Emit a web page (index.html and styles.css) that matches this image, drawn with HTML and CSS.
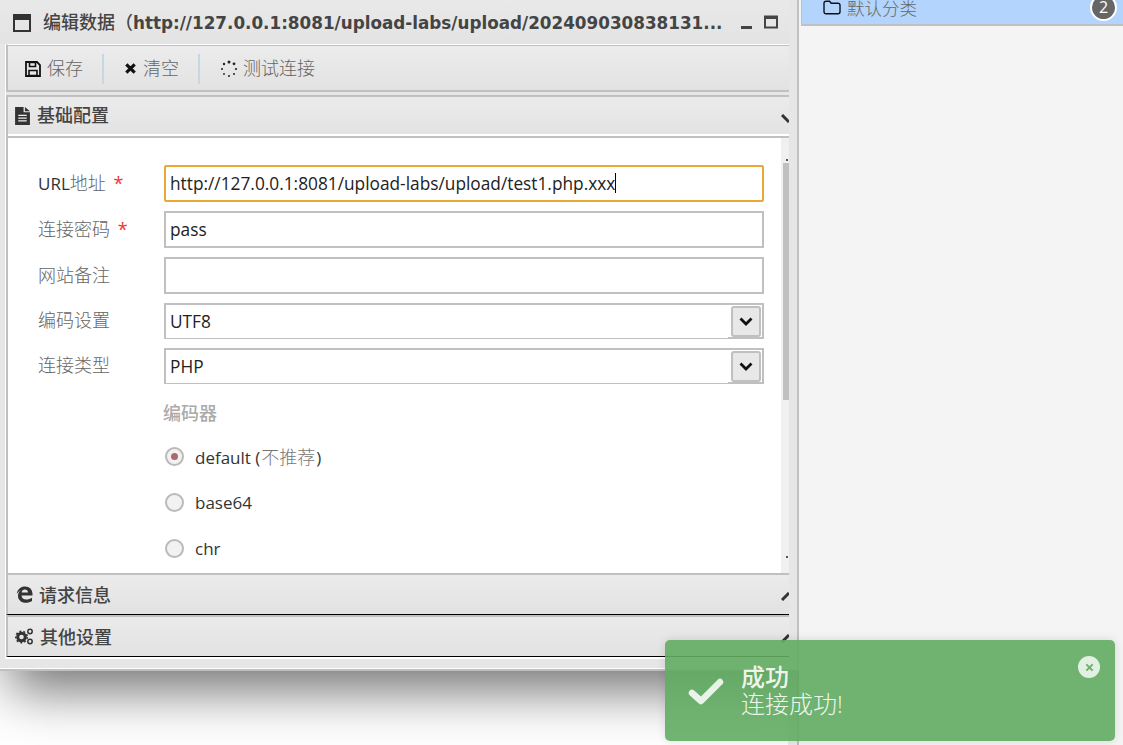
FILE: index.html
```html
<!DOCTYPE html>
<html lang="zh">
<head>
<meta charset="utf-8">
<title>编辑数据</title>
<link rel="stylesheet" href="styles.css">
</head>
<body>
<div class="page">
  <div class="left-pane"></div>
  <div class="splitter"></div>
  <aside class="sidebar">
    <div class="cat-row">
      <svg class="folder" viewBox="0 0 18 15" width="18" height="15"><path d="M3 1.200h3.600l1.600 2h6.800a2 2 0 0 1 2 2v6.600a2 2 0 0 1-2 2H3a2 2 0 0 1-2-2V3.200a2 2 0 0 1 2-2z" fill="none" stroke="#111" stroke-width="1.400"/></svg>
      <span class="cat-name">默认分类</span>
      <span class="badge">2</span>
    </div>
  </aside>
</div>

<section class="window">
  <header class="titlebar">
    <svg class="win-icon" viewBox="0 0 18 18" width="18" height="18"><path d="M0 0h18v18H0z" fill="#333"/><path d="M2 6h14v10H2z" fill="#e6e6e6"/></svg>
    <h1 class="win-title"><span class="cjk-title">编辑数据（</span>http://127.0.0.1:8081/upload-labs/upload/202409030838131...</h1>
    <div class="win-controls">
      <svg viewBox="0 0 11 18" width="11" height="18"><path d="M0 13h11v3H0z" fill="#444"/></svg>
      <svg viewBox="0 0 14 18" width="14" height="18"><path d="M1 3.500h12v11H1z" fill="none" stroke="#444" stroke-width="2"/><path d="M1 4h12v2H1z" fill="#444"/></svg>
      <svg viewBox="0 0 3 18" width="3" height="18"><path d="M0 5l3 3M0 14l3-3" stroke="#444" stroke-width="1.600"/></svg>
    </div>
  </header>

  <div class="win-body">
    <div class="toolbar">
      <button class="tool">
        <svg viewBox="0 0 16 16" width="16" height="16"><path d="M1 1h11l3 3v11H1z" fill="none" stroke="#111" stroke-width="1.800"/><path d="M4.500 1.500h6v4h-6zM4 9.500h8v5H4z" fill="none" stroke="#111" stroke-width="1.600"/></svg>
        <span class="tool-text">保存</span>
      </button>
      <i class="tool-sep"></i>
      <button class="tool tool-clear">
        <svg viewBox="0 0 14 14" width="13" height="13"><path d="M2.500 2.500l9 9M11.500 2.500l-9 9" stroke="#111" stroke-width="3.400"/></svg>
        <span class="tool-text">清空</span>
      </button>
      <i class="tool-sep"></i>
      <button class="tool tool-test">
        <svg viewBox="0 0 18 18" width="18" height="18" fill="#222"><circle cx="9" cy="2" r="1.500"/><circle cx="14" cy="3.800" r="1.400"/><circle cx="16" cy="9" r="1.100"/><circle cx="14" cy="14" r="1"/><circle cx="9" cy="16" r="1"/><circle cx="4" cy="14" r=".9"/><circle cx="2" cy="9" r="1"/><circle cx="4" cy="4" r="1.200"/></svg>
        <span class="tool-text">测试连接</span>
      </button>
    </div>

    <div class="acc-head acc-first">
      <svg viewBox="0 0 14 17" width="15" height="18"><path d="M0 0h8v5h6v12H0z" fill="#333"/><path d="M9.300 0L14 3.900H9.300z" fill="#333"/><path d="M3 8h8M3 10.500h8M3 13h8" stroke="#eee" stroke-width="1.200"/></svg>
      <span class="acc-name">基础配置</span>
      <svg class="chev" viewBox="0 0 8 9" width="8" height="9"><path d="M1 1l7 7" stroke="#333" stroke-width="3"/></svg>
    </div>

    <div class="acc-content">
      <form class="form">
        <div class="row">
          <label class="lbl"><span class="latin-dark">URL</span>地址 <b class="req">*</b></label>
          <div class="field field-focus">http://127.0.0.1:8081/upload-labs/upload/test1.php.xxx<i class="caret"></i></div>
        </div>
        <div class="row">
          <label class="lbl">连接密码 <b class="req">*</b></label>
          <div class="field">pass</div>
        </div>
        <div class="row">
          <label class="lbl">网站备注</label>
          <div class="field"></div>
        </div>
        <div class="row">
          <label class="lbl">编码设置</label>
          <div class="field field-select">UTF8
            <span class="sel-btn"><svg viewBox="0 0 14 9" width="14" height="9"><path d="M1.500 1.500L7 7l5.500-5.500" fill="none" stroke="#111" stroke-width="2.800"/></svg></span>
          </div>
        </div>
        <div class="row">
          <label class="lbl">连接类型</label>
          <div class="field field-select">PHP
            <span class="sel-btn"><svg viewBox="0 0 14 9" width="14" height="9"><path d="M1.500 1.500L7 7l5.500-5.500" fill="none" stroke="#111" stroke-width="2.800"/></svg></span>
          </div>
        </div>
        <div class="encoders">
          <div class="legend">编码器</div>
          <div class="radio-row"><i class="radio radio-on"></i><span>default (<em class="muted">不推荐</em>)</span></div>
          <div class="radio-row"><i class="radio"></i><span>base64</span></div>
          <div class="radio-row"><i class="radio"></i><span>chr</span></div>
        </div>
      </form>
      <div class="scroll">
        <i class="scroll-dot"></i>
        <i class="scroll-thumb"></i>
        <i class="scroll-dot scroll-dot-end"></i>
      </div>
    </div>

    <div class="acc-head acc-closed">
      <svg class="edge-icon" viewBox="0 0 17 17" width="17" height="17"><path fill-rule="evenodd" d="M.8 8C1.300 3 5 .5 9 .5c4.500 0 7.500 3 7.500 7.500v1.500H5.500c.2 2.500 2 4 4.800 4 2 0 4-.6 5.700-1.800v3.200c-1.700 1.200-4 1.800-6.300 1.800-4.500 0-7.700-2.700-7.700-7 0-3 1.500-5 3.500-6C3.700 4.700 1.800 6 .8 8zM5.600 6.500H12c0-2-1.300-3-3.200-3-1.600 0-2.900 1-3.200 3z" fill="#333"/></svg>
      <span class="acc-name">请求信息</span>
      <svg class="chev" viewBox="0 0 8 9" width="8" height="9"><path d="M1 8l7-7" stroke="#333" stroke-width="3"/></svg>
    </div>
    <div class="acc-head acc-closed">
      <svg viewBox="0 0 19 17" width="19" height="17">
        <circle cx="6.500" cy="9" r="3.800" fill="none" stroke="#333" stroke-width="3"/>
        <circle cx="6.500" cy="9" r="5.700" fill="none" stroke="#333" stroke-width="1.600" stroke-dasharray="2 2"/>
        <circle cx="15" cy="3.500" r="2.200" fill="none" stroke="#333" stroke-width="1.500"/>
        <circle cx="15" cy="13.500" r="2.200" fill="none" stroke="#333" stroke-width="1.500"/>
      </svg>
      <span class="acc-name">其他设置</span>
      <svg class="chev" viewBox="0 0 8 9" width="8" height="9"><path d="M1 8l7-7" stroke="#333" stroke-width="3"/></svg>
    </div>
  </div>
</section>

<div class="toast">
  <svg class="toast-check" viewBox="0 0 36 28" width="36" height="28"><path d="M4 16l9 8L32 5" fill="none" stroke="#fff" stroke-opacity=".85" stroke-width="6.500" stroke-linecap="round" stroke-linejoin="round"/></svg>
  <div class="toast-text">
    <div class="toast-title">成功</div>
    <div class="toast-msg">连接成功!</div>
  </div>
  <span class="toast-close"><svg viewBox="0 0 10 10" width="9" height="9"><path d="M1.500 1.500l7 7M8.500 1.500l-7 7" stroke="#6fb070" stroke-width="2.200"/></svg></span>
</div>
</body>
</html>
```

FILE: styles.css
```css
* { box-sizing: border-box; }
html, body { margin: 0; height: 100%; overflow: hidden; }
body {
  font-family: "Open Sans", "Noto Sans CJK SC", sans-serif;
  font-size: 17px;
  color: #333;
  background: #f4f4f4;
}
.page { display: flex; height: 100vh; }
.left-pane { width: 788px; background: #fff; }
.splitter { width: 11px; background: #ececec; border-right: 2px solid #c0c0c0; }
.sidebar { flex: 1; background: #f4f4f4; padding-left: 2px; position: relative; z-index: 1; }
.cat-row {
  display: flex; align-items: center;
  height: 36px; margin-top: -10px; padding-left: 21px;
  background: #b3d4fc;
  border-left: 1px solid #c0c0c0;
  border-bottom: 2px solid #c0c0c0;
}
.folder { margin-right: 6px; }
.cat-name { font-size: 17.500px; color: #666; font-weight: 300; }
.badge {
  margin-left: auto; margin-right: 6px;
  width: 27px; height: 27px; border-radius: 50%;
  background: #666; border: 2px solid #fff; color: #fff;
  display: flex; align-items: center; justify-content: center;
  font-size: 16px;
}

.window {
  position: absolute; left: 0; top: 0;
  width: 799px; height: 671px;
  display: flex; flex-direction: column;
  background: #e6e6e6;
  border-right: 2px solid #c0c0c0;
  border-bottom: 2px solid #c0c0c0;
  box-shadow: 10px 19px 50px rgba(0, 0, 0, .56);
}
.window::after {
  content: ""; height: 1px; background: #fff; margin-top: 9px;
}
.titlebar {
  height: 44px; flex: none; width: 789px;
  display: flex; align-items: center;
  padding-left: 13px;
  background: linear-gradient(#e9e9e9, #e3e3e3);
  overflow: hidden;
}
.win-icon { flex: none; margin-top: 2px; }
.win-title {
  margin: 0 0 2px 12px;
  font-family: "DejaVu Sans", "Noto Sans CJK SC", sans-serif;
  font-size: 16.800px; font-weight: 700; color: #444;
  white-space: nowrap; width: 683px; flex: none; overflow: hidden;
}
.cjk-title { font-family: "Noto Sans CJK SC", sans-serif; font-weight: 500; font-size: 18px; }
.win-controls { display: flex; gap: 12px; margin-left: 15px; align-items: center; flex: none; }

.win-body {
  flex: none;
  margin-left: 5px; width: 784px; height: 615px;
  border-left: 1px solid #fff;
  display: flex; flex-direction: column;
  overflow: hidden;
  border-bottom: 2px solid #fff;
}
.toolbar {
  flex: none; height: 48px;
  display: flex; align-items: center;
  padding-left: 17px;
  border-left: 2px solid #c0c0c0;
  border-top: 1px solid #fff;
  box-shadow: inset 0 1px 0 #c0c0c0, inset 0 -2px 0 #c0c0c0;
  background: linear-gradient(#ececec, #e2e2e2);
}
.tool {
  display: flex; align-items: center; gap: 6px;
  border: 0; background: none; padding: 0;
  font: inherit; font-size: 18px; color: #666; font-weight: 300;
}
.tool-text { margin-bottom: 4px; }
.tool-test { gap: 5px; }
.tool-sep { width: 2px; height: 30px; background: #c5d8e0; margin: 0 20px 0 19px; }
.acc-head {
  flex: none;
  display: flex; align-items: center;
  padding-left: 7px;
  border-left: 2px solid #c0c0c0;
  background: linear-gradient(#ebebeb, #e2e2e2);
  position: relative;
}
.acc-name { font-size: 18px; color: #444; font-weight: 500; margin-left: 6px; margin-bottom: 2px; }
.acc-first .acc-name { margin-bottom: 4px; margin-left: 7px; }
.acc-first {
  margin-top: 3px; height: 43px; padding-bottom: 4px;
  border-top: 2px solid #c0c0c0;
  box-shadow: inset 0 -2px 0 #c0c0c0, inset 0 -4px 0 #fff;
}
.acc-closed {
  height: 42px;
  border-top: 2px solid #c0c0c0;
  border-bottom: 1px solid #000;
}
.edge-icon { margin-left: 1px; }
.chev { position: absolute; right: 0; top: 17px; }

.acc-content {
  flex: none; height: 435px;
  display: flex;
  border-left: 2px solid #c0c0c0;
  background: #fff;
}
.form { width: 773px; padding: 27px 17px 0 30px; overflow: hidden; }
.row { display: flex; align-items: center; margin-bottom: 9px; }
.lbl { width: 126px; flex: none; font-size: 18px; color: #666; font-weight: 300; padding-bottom: 4px; }
.latin-dark { color: #333; font-weight: 400; font-size: 17px; }
.req { color: #e33; font-weight: 400; margin-left: 3px; }
.field {
  flex: 1; height: 37px;
  border: 2px solid #c0c0c0;
  padding: 0 0 1px 4px;
  display: flex; align-items: center;
  font-size: 17.300px; color: #222;
  position: relative;
  white-space: nowrap;
}
.field-focus { border-color: #e8a935; border-radius: 2px; }
.caret { width: 1px; height: 20px; background: #000; }
.field-select {
  height: 36px;
  border-bottom-width: 1px;
}
.field-select::after {
  content: ""; position: absolute; right: -2px; top: -2px; bottom: -1px; width: 34px;
  border: solid #c0c0c0; border-width: 2px 2px 2px 0;
}
.sel-btn {
  position: absolute; right: 1px; top: 1px;
  width: 30px; height: 31px;
  border: 2px solid #c0c0c0; border-radius: 3px;
  background: #e8e8e8;
  display: flex; align-items: center; justify-content: center;
  z-index: 1;
}
.encoders { margin-left: 126px; padding-top: 7px; }
.legend { font-size: 18px; color: #aaa; font-weight: 500; height: 26px; line-height: 26px; margin-bottom: 7px; margin-left: -1px; }
.radio-row { display: flex; align-items: center; gap: 11px; height: 46px; font-size: 17px; color: #333; }
.radio {
  width: 19px; height: 19px; border-radius: 50%;
  border: 2px solid #bdb9b9; background: #f2f2f2;
  margin-left: 1px; flex: none;
  display: flex; align-items: center; justify-content: center;
}
.radio-on::after { content: ""; width: 7px; height: 7px; border-radius: 50%; background: #a96c6c; }
.muted { font-style: normal; color: #777; font-weight: 300; font-size: 18px; margin: 0 1px; }
.scroll {
  flex: 1; background: #f0f0f0;
  padding: 21px 0 0 2px;
  display: flex; flex-direction: column; align-items: flex-end;
}
.scroll-dot { width: 2px; height: 2px; background: #555; flex: none; margin-right: 1px; }
.scroll-thumb { width: 6px; height: 237px; background: #c0c0c0; margin-top: 2px; flex: none; }
.scroll-dot-end { margin-top: 156px; }

.toast {
  position: absolute; left: 665px; top: 640px; z-index: 2;
  width: 450px; height: 101px;
  background: rgba(98, 171, 98, .9);
  border-radius: 5px;
  box-shadow: 0 0 10px rgba(0, 0, 0, .12);
  display: flex; padding: 37px 0 0 23px;
  color: rgba(255, 255, 255, .9);
}
.toast-check { margin-right: 17px; flex: none; }
.toast-text { margin-top: -14px; font-size: 24px; line-height: 27px; }
.toast-title { font-weight: 500; }
.toast-msg { font-weight: 300; }
.toast-close {
  position: absolute; right: 15px; top: 16px;
  width: 22px; height: 22px; border-radius: 50%;
  background: rgba(255, 255, 255, .8);
  display: flex; align-items: center; justify-content: center;
}
```
